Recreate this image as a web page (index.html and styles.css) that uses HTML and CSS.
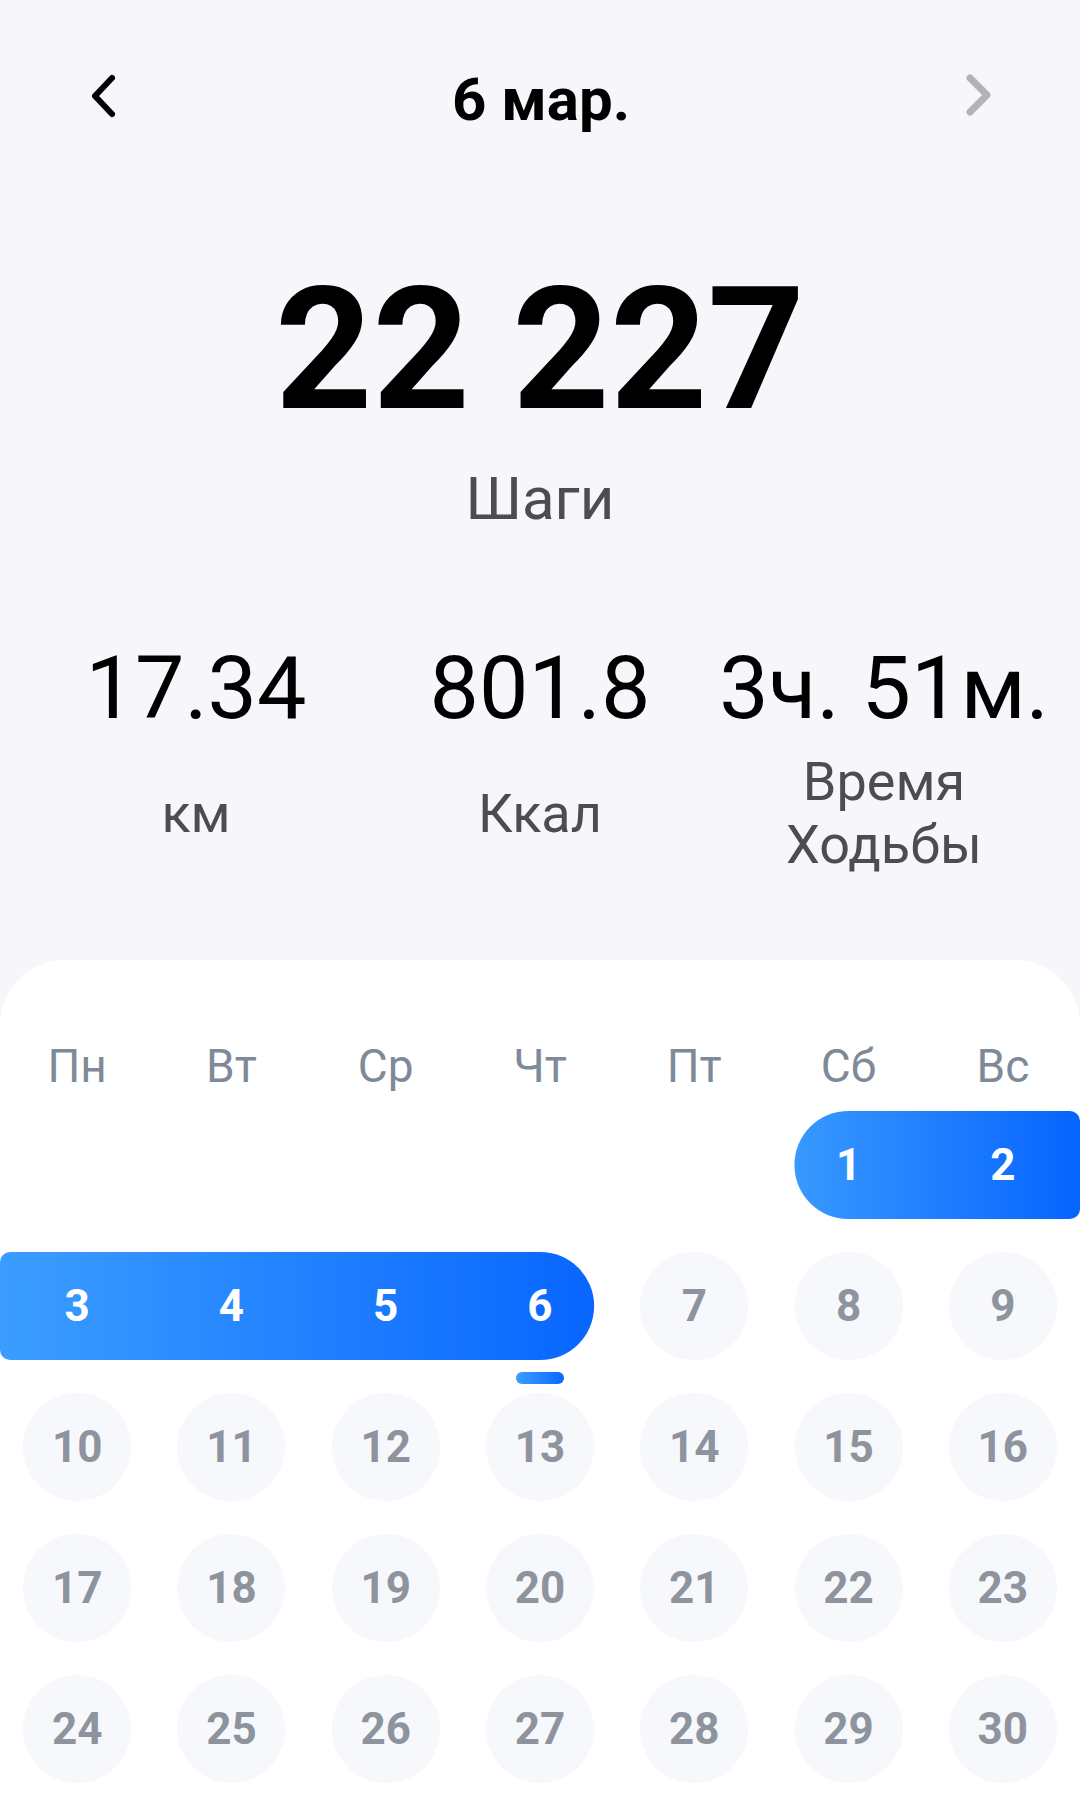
FILE: index.html
```html
<!DOCTYPE html>
<html lang="ru">
<head>
    <meta charset="UTF-8">
    <title>Шаги</title>
    <link rel="stylesheet" href="styles.css">
</head>
<body>
<div class="page">
    <div class="header">
        <span class="arrow">
            <svg width="40" height="50" viewBox="0 0 40 50"><polyline points="30,7 13,25 30,43" fill="none" stroke="#000" stroke-width="6" stroke-linecap="round" stroke-linejoin="round"/></svg>
        </span>
        <span class="title">6 мар.</span>
        <span class="arrow">
            <svg width="40" height="50" viewBox="0 0 40 50"><polyline points="10,7 27,24 10,41" fill="none" stroke="#b3b3b7" stroke-width="7" stroke-linecap="round" stroke-linejoin="round"/></svg>
        </span>
    </div>

    <div class="steps">22 227</div>
    <div class="steps-label">Шаги</div>

    <div class="stats">
        <div class="stat">
            <div class="stat-value">17.34</div>
            <div class="stat-label">км</div>
        </div>
        <div class="stat">
            <div class="stat-value">801.8</div>
            <div class="stat-label">Ккал</div>
        </div>
        <div class="stat">
            <div class="stat-value">3ч. 51м.</div>
            <div class="stat-label">Время<br>Ходьбы</div>
        </div>
    </div>

    <div class="calendar">
        <div class="weekdays">
            <span>Пн</span><span>Вт</span><span>Ср</span><span>Чт</span><span>Пт</span><span>Сб</span><span>Вс</span>
        </div>

        <div class="week">
            <div class="range range-end" style="grid-column: 6 / 8">
                <span>1</span><span>2</span>
            </div>
        </div>

        <div class="week">
            <div class="range range-start" style="grid-column: 1 / 5">
                <span>3</span><span>4</span><span>5</span><span>6</span>
            </div>
            <span class="day"><i>7</i></span>
            <span class="day"><i>8</i></span>
            <span class="day"><i>9</i></span>
            <span class="today-mark"></span>
        </div>

        <div class="week">
            <span class="day"><i>10</i></span>
            <span class="day"><i>11</i></span>
            <span class="day"><i>12</i></span>
            <span class="day"><i>13</i></span>
            <span class="day"><i>14</i></span>
            <span class="day"><i>15</i></span>
            <span class="day"><i>16</i></span>
        </div>

        <div class="week">
            <span class="day"><i>17</i></span>
            <span class="day"><i>18</i></span>
            <span class="day"><i>19</i></span>
            <span class="day"><i>20</i></span>
            <span class="day"><i>21</i></span>
            <span class="day"><i>22</i></span>
            <span class="day"><i>23</i></span>
        </div>

        <div class="week">
            <span class="day"><i>24</i></span>
            <span class="day"><i>25</i></span>
            <span class="day"><i>26</i></span>
            <span class="day"><i>27</i></span>
            <span class="day"><i>28</i></span>
            <span class="day"><i>29</i></span>
            <span class="day"><i>30</i></span>
        </div>
    </div>
</div>
</body>
</html>
```

FILE: styles.css
```css
body {
    margin: 0;
    padding: 0;
    background: #f7f7fb;
    font-family: Roboto, "Noto Sans", sans-serif;
}

.page {
    width: 1080px;
    min-height: 1804px;
    display: flex;
    flex-direction: column;
}

/* шапка */
.header {
    display: flex;
    align-items: center;
    justify-content: space-between;
    padding: 66px 80px 0 82px;
    height: 68px;
}

.header .arrow {
    display: flex;
    width: 40px;
    height: 50px;
    margin-top: -8px;
}

.header .title {
    font-size: 60px;
    line-height: 68px;
    font-weight: bold;
    color: #000;
}

/* шаги */
.steps {
    margin-top: 131px;
    font-size: 170px;
    line-height: 170px;
    font-weight: bold;
    text-align: center;
    color: #000;
}

.steps-label {
    margin-top: 29px;
    font-size: 60px;
    line-height: 70px;
    text-align: center;
    color: #4d4d50;
}

/* км / ккал / время */
.stats {
    display: flex;
    padding: 0 24px;
    margin-top: 104px;
}

.stat {
    flex: 1;
    display: flex;
    flex-direction: column;
    align-items: center;
}

.stat-value {
    font-size: 88px;
    line-height: 100px;
    color: #000;
    white-space: nowrap;
}

.stat-label {
    margin-top: 12px;
    height: 126px;
    display: flex;
    align-items: center;
    text-align: center;
    font-size: 54px;
    line-height: 63px;
    color: #4d4d50;
}

/* календарь */
.calendar {
    flex: 1;
    margin-top: 84px;
    padding-top: 79px;
    background: #fff;
    border-radius: 66px 66px 0 0;
}

.weekdays {
    display: grid;
    grid-template-columns: repeat(7, 1fr);
    font-size: 46px;
    line-height: 54px;
    color: #7f8a98;
    text-align: center;
}

.week {
    position: relative;
    display: grid;
    grid-template-columns: repeat(7, 1fr);
    height: 108px;
    margin-top: 33px;
}

.weekdays + .week {
    margin-top: 18px;
}

.day {
    display: flex;
    align-items: center;
    justify-content: center;
}

.day i {
    width: 108px;
    height: 108px;
    border-radius: 50%;
    background: #f7f8fb;
    display: flex;
    align-items: center;
    justify-content: center;
    font-style: normal;
    font-size: 44px;
    font-weight: bold;
    color: #8e949e;
}

.range {
    display: grid;
    align-items: center;
    justify-items: center;
    grid-auto-flow: column;
    grid-auto-columns: 1fr;
    background: linear-gradient(90deg, #3c9dff, #0664ff);
    font-size: 44px;
    font-weight: bold;
    color: #fff;
}

.range-end {
    clip-path: inset(0 0 0 23px round 54px 10px 10px 54px);
}

.range-start {
    clip-path: inset(0 23px 0 0 round 10px 54px 54px 10px);
}

.today-mark {
    position: absolute;
    left: calc(100% * 3.5 / 7 - 24px);
    top: 120px;
    width: 48px;
    height: 12px;
    border-radius: 6px;
    background: linear-gradient(90deg, #3c9dff, #0a68ff);
}
```
